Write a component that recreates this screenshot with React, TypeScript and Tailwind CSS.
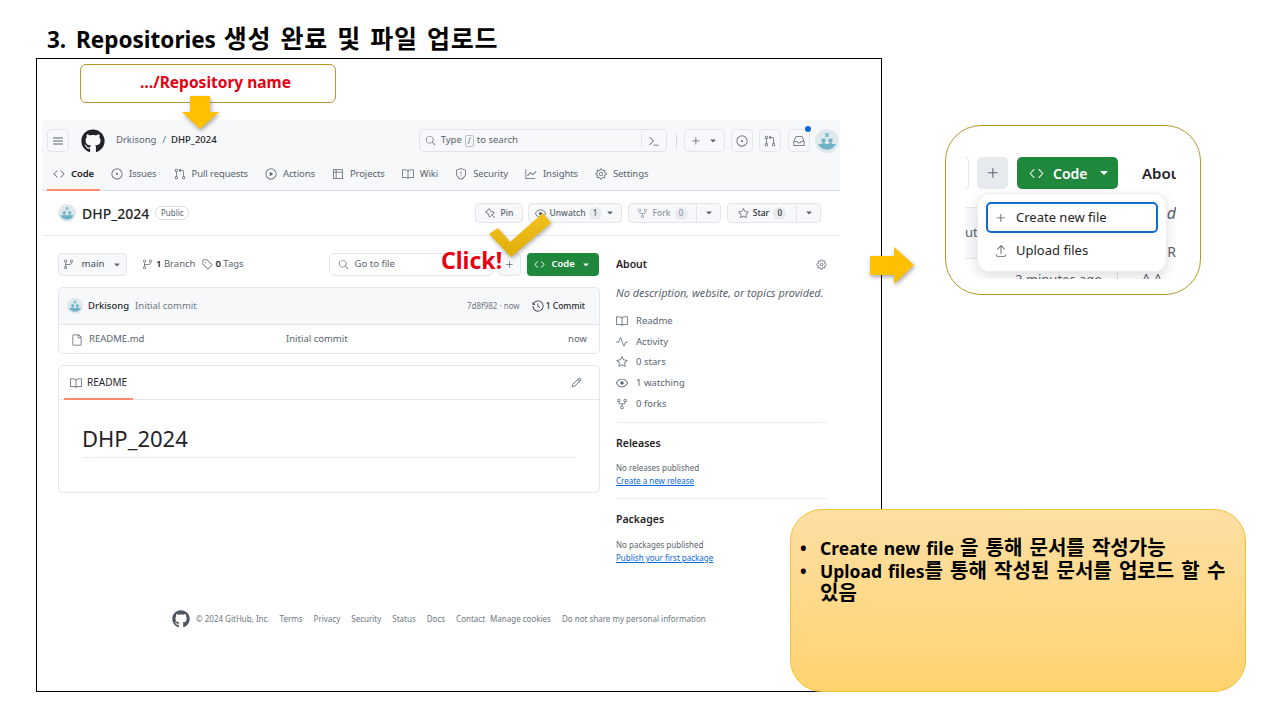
import type { ReactNode } from "react";
import { FaGithub } from "react-icons/fa";
import { FiMenu } from "react-icons/fi";
import {
  GoBook,
  GoCode,
  GoCommandPalette,
  GoEye,
  GoFile,
  GoGear,
  GoGitBranch,
  GoGitPullRequest,
  GoGraph,
  GoHistory,
  GoInbox,
  GoIssueOpened,
  GoPencil,
  GoPin,
  GoPlay,
  GoPlus,
  GoPulse,
  GoRepoForked,
  GoSearch,
  GoShield,
  GoStar,
  GoTable,
  GoTag,
  GoTriangleDown,
  GoUpload,
} from "react-icons/go";

const tabs = [
  { label: "Code", icon: GoCode, active: true },
  { label: "Issues", icon: GoIssueOpened },
  { label: "Pull requests", icon: GoGitPullRequest },
  { label: "Actions", icon: GoPlay },
  { label: "Projects", icon: GoTable },
  { label: "Wiki", icon: GoBook },
  { label: "Security", icon: GoShield },
  { label: "Insights", icon: GoGraph },
  { label: "Settings", icon: GoGear },
];

const aboutRows = [
  { label: "Readme", icon: GoBook },
  { label: "Activity", icon: GoPulse },
  { label: "0 stars", icon: GoStar },
  { label: "1 watching", icon: GoEye },
  { label: "0 forks", icon: GoRepoForked },
];

const footerLinks = ["Terms", "Privacy", "Security", "Status", "Docs", "Contact"];

function Avatar({ size }: { size: number }) {
  return (
    <svg width={size} height={size} viewBox="0 0 24 24" className="shrink-0">
      <circle cx="12" cy="12" r="12" fill="#dfe9ed" />
      <rect x="10" y="4" width="4" height="4" fill="#8cc3d0" />
      <rect x="6.5" y="9.5" width="4" height="4" rx="1" fill="#6fb4c6" />
      <rect x="13.5" y="9.5" width="4" height="4" rx="1" fill="#6fb4c6" />
      <path d="M3 15h4v-1h3v1h4v-1h3v1h4a10 10 0 0 1-18 0z" fill="#6fb4c6" />
    </svg>
  );
}

function ToolButton({ children, className = "" }: { children: ReactNode; className?: string }) {
  return (
    <div
      className={`flex shrink-0 items-center justify-center rounded-[4px] border border-[#e3e6ea] bg-[#f6f8fa] text-[#59636e] ${className}`}
    >
      {children}
    </div>
  );
}

function Count({ value }: { value: string }) {
  return (
    <span className="flex h-[13px] w-[13px] items-center justify-center rounded-full bg-[#e8ebef] text-[8px] font-medium">
      {value}
    </span>
  );
}

function TopNav() {
  return (
    <div className="h-[71px] border-b border-[#d8dee4] bg-[#f6f8fa]">
      <div className="flex h-[40px] items-center pt-[1px]">
        <ToolButton className="ml-[5px] h-[23px] w-[22px] bg-transparent">
          <FiMenu size={12} />
        </ToolButton>
        <FaGithub size={24} className="ml-[12px] text-[#1f2328]" />
        <span className="ml-[11px] text-[9.5px] text-[#59636e]">Drkisong</span>
        <span className="ml-[6px] text-[9.5px] text-[#59636e]">/</span>
        <span className="ml-[5px] text-[9.5px] font-medium text-[#1f2328]">DHP_2024</span>
        <div className="ml-[202px] flex h-[23px] w-[248px] shrink-0 items-center rounded-[5px] border border-[#e0e4e8] pl-[5px] text-[#59636e]">
          <GoSearch size={11} />
          <span className="ml-[5px] text-[9.5px]">Type</span>
          <span className="mx-[3px] flex h-[12px] w-[9px] items-center justify-center rounded-[2px] border border-[#b9c0c8] text-[8px]">
            /
          </span>
          <span className="text-[9.5px]">to search</span>
          <span className="ml-auto flex h-[14px] items-center border-l border-[#e0e4e8] pl-[6px] pr-[6px]">
            <GoCommandPalette size={12} />
          </span>
        </div>
        <span className="ml-[9px] h-[14px] w-px bg-[#d8dee4]" />
        <ToolButton className="ml-[7px] h-[23px] w-[41px] gap-[6px] bg-transparent">
          <GoPlus size={12} />
          <GoTriangleDown size={10} />
        </ToolButton>
        <ToolButton className="ml-[6px] h-[23px] w-[22px] bg-transparent">
          <GoIssueOpened size={12} />
        </ToolButton>
        <ToolButton className="ml-[6px] h-[23px] w-[22px] bg-transparent">
          <GoGitPullRequest size={12} />
        </ToolButton>
        <div className="relative ml-[7px]">
          <ToolButton className="h-[23px] w-[22px] bg-transparent">
            <GoInbox size={12} />
          </ToolButton>
          <span className="absolute right-[-1px] top-[-3px] h-[6px] w-[6px] rounded-full bg-[#0969da]" />
        </div>
        <div className="ml-[5px]">
          <Avatar size={24} />
        </div>
      </div>
      <div className="flex h-[30px] items-center gap-[17px] pl-[11px]">
        {tabs.map((tab) => (
          <div key={tab.label} className="relative flex h-full items-center gap-[6px] pb-[2px]">
            <tab.icon size={12} className="text-[#59636e]" />
            <span
              className={
                tab.active
                  ? "text-[9.5px] font-semibold tracking-[-0.1px] text-[#1f2328]"
                  : "text-[9.5px] tracking-[-0.1px] text-[#59636e]"
              }
            >
              {tab.label}
            </span>
            {tab.active && (
              <span className="absolute bottom-[-1px] left-[-6px] right-[-6px] h-[2px] bg-[#fd8c73]" />
            )}
          </div>
        ))}
      </div>
    </div>
  );
}

function RepoHead() {
  return (
    <div className="flex h-[45px] items-center border-b border-[#e6e9ed] pl-[16px] pr-[19px]">
      <Avatar size={18} />
      <span className="ml-[6px] text-[14px] font-medium text-[#1f2328]">DHP_2024</span>
      <span className="ml-[6px] flex h-[14px] w-[34px] items-center justify-center rounded-full border border-[#d8dee4] text-[8px] text-[#59636e]">
        Public
      </span>
      <div className="ml-auto flex items-center text-[8.5px] font-medium text-[#25292e]">
        <ToolButton className="h-[20px] w-[48px] gap-[5px]">
          <GoPin size={11} />
          Pin
        </ToolButton>
        <ToolButton className="ml-[5px] h-[20px] w-[94px] gap-[3px] text-[#25292e]">
          <GoEye size={11} />
          Unwatch
          <Count value="1" />
          <GoTriangleDown size={10} />
        </ToolButton>
        <div className="ml-[6px] flex h-[20px] w-[93px] rounded-[4px] border border-[#e3e6ea] bg-[#f6f8fa] text-[#8c959f]">
          <div className="flex flex-1 items-center justify-center gap-[4px] border-r border-[#e3e6ea]">
            <GoRepoForked size={11} />
            Fork
            <Count value="0" />
          </div>
          <div className="flex w-[23px] items-center justify-center text-[#59636e]">
            <GoTriangleDown size={10} />
          </div>
        </div>
        <div className="ml-[6px] flex h-[20px] w-[94px] rounded-[4px] border border-[#e3e6ea] bg-[#f6f8fa]">
          <div className="flex flex-1 items-center justify-center gap-[4px] border-r border-[#e3e6ea]">
            <GoStar size={11} className="text-[#59636e]" />
            Star
            <Count value="0" />
          </div>
          <div className="flex w-[23px] items-center justify-center text-[#59636e]">
            <GoTriangleDown size={10} />
          </div>
        </div>
      </div>
    </div>
  );
}

function FileColumn() {
  return (
    <div className="w-[542px]">
      <div className="flex h-[23px] items-center text-[#59636e]">
        <ToolButton className="h-[23px] w-[69px] gap-[8px] text-[9.5px] font-medium text-[#25292e]">
          <GoGitBranch size={11} className="text-[#59636e]" />
          main
          <GoTriangleDown size={10} className="text-[#59636e]" />
        </ToolButton>
        <GoGitBranch size={11} className="ml-[15px]" />
        <span className="ml-[3px] text-[9.5px]">
          <b className="font-semibold text-[#25292e]">1</b> Branch
        </span>
        <GoTag size={11} className="ml-[7px]" />
        <span className="ml-[2px] text-[9.5px]">
          <b className="font-semibold text-[#25292e]">0</b> Tags
        </span>
        <div className="ml-[85px] flex h-[23px] w-[164px] items-center rounded-[5px] border border-[#e3e6ea] pl-[8px]">
          <GoSearch size={11} />
          <span className="ml-[6px] text-[9.5px]">Go to file</span>
        </div>
        <ToolButton className="ml-[5px] h-[23px] w-[23px]">
          <GoPlus size={11} />
        </ToolButton>
        <div className="ml-[6px] flex h-[23px] w-[72px] items-center justify-center gap-[6px] rounded-[4px] bg-[#1f883d] text-[9.5px] font-semibold text-white">
          <GoCode size={11} />
          Code
          <GoTriangleDown size={10} />
        </div>
      </div>

      <div className="mt-[11px] rounded-[5px] border border-[#e3e6ea]">
        <div className="flex h-[37px] items-center rounded-t-[5px] border-b border-[#e3e6ea] bg-[#f6f8fa] pl-[8px] pr-[14px]">
          <Avatar size={16} />
          <span className="ml-[5px] text-[9.5px] font-medium text-[#25292e]">Drkisong</span>
          <span className="ml-[6px] text-[9.5px] text-[#6e7781]">Initial commit</span>
          <span className="ml-auto text-[8px] text-[#6e7781]">7d8f982 · now</span>
          <GoHistory size={12} className="ml-[12px] text-[#25292e]" />
          <span className="ml-[2px] text-[8.5px] font-medium text-[#25292e]">1 Commit</span>
        </div>
        <div className="flex h-[28px] items-center pl-[12px] pr-[12px] pt-[1px] text-[9.5px] text-[#59636e]">
          <GoFile size={12} />
          <span className="ml-[6px] w-[197px]">README.md</span>
          <span>Initial commit</span>
          <span className="ml-auto">now</span>
        </div>
      </div>

      <div className="mt-[11px] h-[128px] rounded-[5px] border border-[#e3e6ea]">
        <div className="flex h-[34px] items-center border-b border-[#e3e6ea] pl-[11px] pr-[17px] text-[#59636e]">
          <div className="relative flex h-full items-center gap-[5px] text-[10px] text-[#25292e]">
            <GoBook size={12} className="text-[#59636e]" />
            README
            <span className="absolute bottom-[-1px] left-[-6px] right-[-6px] h-[2px] bg-[#fd8c73]" />
          </div>
          <GoPencil size={11} className="ml-auto" />
        </div>
        <div className="mx-[23px] mt-[23px] border-b border-[#e8ebef] pb-[3px] text-[22px] leading-[31px] text-[#1f2328]">
          DHP_2024
        </div>
      </div>
    </div>
  );
}

function AboutColumn() {
  return (
    <div className="ml-[16px] w-[211px] text-[#59636e]">
      <div className="flex h-[23px] items-center justify-between">
        <span className="text-[10.5px] font-semibold text-[#1f2328]">About</span>
        <GoGear size={11} />
      </div>
      <p className="mt-[10px] whitespace-nowrap text-[10.9px] italic leading-[14px]">
        No description, website, or topics provided.
      </p>
      <div className="mt-[11px] flex flex-col border-b border-[#e8ebef] pb-[8px]">
        {aboutRows.map((row) => (
          <div key={row.label} className="flex h-[20.6px] items-center gap-[8px] text-[9.5px]">
            <row.icon size={12} />
            {row.label}
          </div>
        ))}
      </div>
      <div className="mt-[13px] text-[10.5px] font-semibold leading-[14px] text-[#1f2328]">Releases</div>
      <div className="mt-[11px] text-[8px] leading-[13px]">No releases published</div>
      <div className="text-[8px] leading-[13px] text-[#0969da] underline">Create a new release</div>
      <div className="mt-[11px] border-t border-[#e8ebef]" />
      <div className="mt-[13px] text-[10.5px] font-semibold leading-[14px] text-[#1f2328]">Packages</div>
      <div className="mt-[12px] text-[8px] leading-[13px]">No packages published</div>
      <div className="text-[8px] leading-[13px] text-[#0969da] underline">Publish your first package</div>
    </div>
  );
}

function Footer() {
  return (
    <div className="mt-[46px] flex h-[18px] items-center pl-[130px] text-[8px] text-[#6e7781]">
      <FaGithub size={18} className="text-[#4d5560]" />
      <span className="ml-[6px]">© 2024 GitHub, Inc.</span>
      <div className="ml-[10px] flex gap-[11px]">
        {footerLinks.map((link) => (
          <span key={link}>{link}</span>
        ))}
      </div>
      <span className="ml-[5px]">Manage cookies</span>
      <span className="ml-[11px]">Do not share my personal information</span>
    </div>
  );
}

function ZoomedMenu() {
  return (
    <div className="absolute left-[945px] top-[125px] h-[170px] w-[256px] rounded-[36px] border border-[#b8962e] bg-white pl-[19px] pt-[24px]">
      <div className="relative h-[129px] w-[211px] overflow-hidden text-[#1f2328]">
        <div className="flex h-[39px] items-start pt-[7px]">
          <div className="h-[32px] w-[4px] shrink-0 rounded-r-[5px] border border-l-0 border-[#e3e6ea]" />
          <div className="ml-[8px] flex h-[32px] w-[31px] shrink-0 items-center justify-center rounded-[5px] bg-[#e6e9ee] text-[#59636e]">
            <GoPlus size={16} />
          </div>
          <div className="ml-[9px] flex h-[32px] w-[101px] shrink-0 items-center gap-[9px] rounded-[5px] bg-[#1f883d] pl-[12px] text-[14px] font-semibold text-white">
            <GoCode size={15} />
            Code
            <GoTriangleDown size={14} />
          </div>
          <span className="ml-[24px] shrink-0 whitespace-nowrap text-[15px] font-semibold leading-[32px]">About</span>
        </div>
        <div className="mt-[18px] flex h-[52px] w-[153px] items-center border-y border-[#e3e6ea] bg-[#f6f8fa] text-[13px] text-[#59636e]">
          ute
        </div>
        <div className="ml-[50px] mt-[11px] text-[13px] leading-[18px] text-[#59636e]">2 minutes ago</div>
        <span className="absolute left-[152px] top-[118px] h-[11px] w-px bg-[#d8dee4]" />
        <span className="absolute left-[177px] top-[119px] text-[13px] leading-[18px] text-[#59636e]">A A</span>
        <span className="absolute right-[0px] top-[51px] text-[16px] italic text-[#59636e]">d</span>
        <span className="absolute right-[0px] top-[91px] text-[14px] text-[#59636e]">R</span>

        <div className="absolute left-[12px] top-[43px] h-[79px] w-[190px] rounded-[12px] border border-[#eceef1] bg-white px-[8px] pt-[8px] shadow-[0_4px_12px_rgba(31,35,40,0.15)]">
          <div className="flex h-[31px] items-center gap-[8px] rounded-[5px] border-2 border-[#0f6cd0] pl-[6px] text-[13px]">
            <GoPlus size={14} className="text-[#59636e]" />
            Create new file
          </div>
          <div className="mt-[2px] flex h-[31px] items-center gap-[8px] pl-[8px] text-[13px]">
            <GoUpload size={14} className="text-[#59636e]" />
            Upload files
          </div>
        </div>
      </div>
    </div>
  );
}

function Notes() {
  return (
    <div className="absolute left-[790px] top-[509px] h-[183px] w-[456px] rounded-[32px] border border-[#f2c138] bg-gradient-to-b from-[#fedfa3] to-[#ffd36e] pl-[9px] pr-[16px] pt-[27px] text-[17.5px] font-bold leading-[22.5px] text-black [word-spacing:1.5px]">
      <div className="flex">
        <span className="w-[20px] shrink-0">•</span>
        <span>
          Create new file <span className="text-[20px] leading-[22.5px] [word-spacing:2px]">을 통해 문서를 작성가능</span>
        </span>
      </div>
      <div className="flex">
        <span className="w-[20px] shrink-0">•</span>
        <span>
          Upload files
          <span className="text-[20px] leading-[22.5px] [word-spacing:2px]">를 통해 작성된 문서를 업로드 할 수 있음</span>
        </span>
      </div>
    </div>
  );
}

function Arrows() {
  return (
    <>
      <svg className="absolute left-[176px] top-[92px]" width="50" height="44" viewBox="176 92 50 44">
        <path d="M190 96h20v16h9l-19 17-18-17h8z" fill="#ffc000" className="drop-shadow-[1px_2px_2px_rgba(0,0,0,0.35)]" />
      </svg>
      <svg className="absolute left-[866px] top-[243px]" width="54" height="46" viewBox="866 243 54 46">
        <path d="M870 256h24v-9l20 18-20 19v-9h-24z" fill="#ffc000" className="drop-shadow-[1px_2px_2px_rgba(0,0,0,0.35)]" />
      </svg>
      <svg className="absolute left-[485px] top-[209px]" width="70" height="52" viewBox="485 209 70 52">
        <defs>
          <linearGradient id="check" x1="0" y1="0" x2="0" y2="1">
            <stop offset="0" stopColor="#f4c21f" />
            <stop offset="1" stopColor="#e0ae0a" />
          </linearGradient>
        </defs>
        <path d="M489 234l9-6 12 14 33-29 8 10-40 34z" fill="url(#check)" className="drop-shadow-[1px_2px_2px_rgba(0,0,0,0.3)]" />
      </svg>
    </>
  );
}

export default function App() {
  return (
    <div className="relative h-[720px] w-[1280px] overflow-hidden bg-white font-['Noto_Sans','Noto_Sans_CJK_KR',sans-serif]">
      <h1 className="h-[58px] whitespace-nowrap pl-[47px] pt-[20px] text-[22.5px] font-bold leading-[36px] text-black [word-spacing:2px]">
        <span className="mr-[2px]">3.</span> Repositories{" "}
        <span className="text-[25px] tracking-[0.75px]">생성 완료 및 파일 업로드</span>
      </h1>
      <div className="ml-[36px] h-[634px] w-[846px] border border-black">
        <div className="ml-[5px] mt-[61px] w-[798px]">
          <TopNav />
          <RepoHead />
          <div className="flex pl-[16px] pt-[17px]">
            <FileColumn />
            <AboutColumn />
          </div>
          <Footer />
        </div>
      </div>

      <div className="absolute left-[80px] top-[64px] flex h-[39px] w-[256px] items-center justify-center rounded-[6px] border border-[#b8962e] bg-white pb-[1px] pl-[15px] text-[15.5px] font-bold text-[#e60012]">
        …/Repository name
      </div>
      <Arrows />
      <span className="absolute left-[441px] top-[243px] text-[23px] font-bold leading-[34px] text-[#e60012]">Click!</span>
      <ZoomedMenu />
      <Notes />
    </div>
  );
}
